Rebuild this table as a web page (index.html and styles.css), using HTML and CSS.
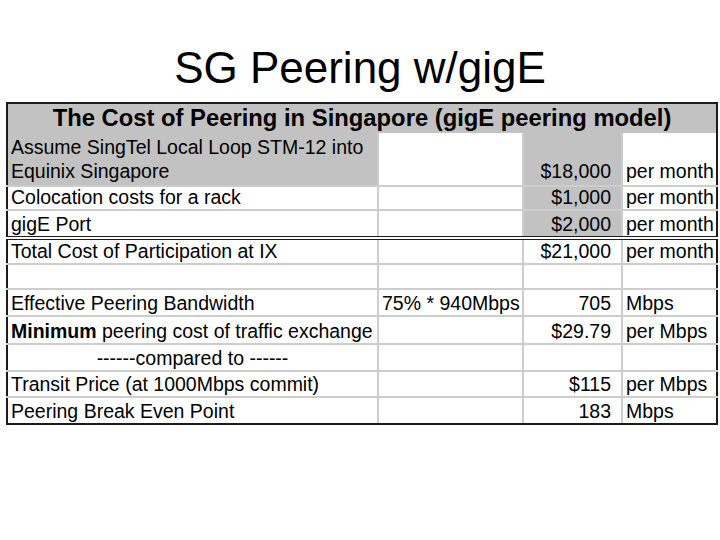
FILE: index.html
```html
<!DOCTYPE html>
<html>
<head>
<meta charset="utf-8">
<title>SG Peering w/gigE</title>
<link rel="stylesheet" href="styles.css">
</head>
<body>
<h1 class="title">SG Peering w/gigE</h1>
<table class="cost">
  <colgroup>
    <col class="c1"><col class="c2"><col class="c3"><col class="c4">
  </colgroup>
  <tr class="r-head">
    <th colspan="4">The Cost of Peering in Singapore (gigE peering model)</th>
  </tr>
  <tr class="r-assume">
    <td class="shade">Assume SingTel Local Loop STM-12 into<br>Equinix Singapore</td>
    <td></td>
    <td class="shade num">$18,000</td>
    <td>per month</td>
  </tr>
  <tr class="r-coloc">
    <td>Colocation costs for a rack</td>
    <td></td>
    <td class="shade num">$1,000</td>
    <td>per month</td>
  </tr>
  <tr class="r-port">
    <td>gigE Port</td>
    <td></td>
    <td class="shade num">$2,000</td>
    <td>per month</td>
  </tr>
  <tr class="r-total">
    <td>Total Cost of Participation at IX</td>
    <td></td>
    <td class="num">$21,000</td>
    <td>per month</td>
  </tr>
  <tr class="r-empty">
    <td></td><td></td><td></td><td></td>
  </tr>
  <tr class="r-eff">
    <td>Effective Peering Bandwidth</td>
    <td>75% * 940Mbps</td>
    <td class="num">705</td>
    <td>Mbps</td>
  </tr>
  <tr class="r-min">
    <td><b>Minimum</b> peering cost of traffic exchange</td>
    <td></td>
    <td class="num">$29.79</td>
    <td>per Mbps</td>
  </tr>
  <tr class="r-cmp">
    <td class="center">------compared to ------</td>
    <td></td><td></td><td></td>
  </tr>
  <tr class="r-transit">
    <td>Transit Price (at 1000Mbps commit)</td>
    <td></td>
    <td class="num">$115</td>
    <td>per Mbps</td>
  </tr>
  <tr class="r-break">
    <td>Peering Break Even Point</td>
    <td></td>
    <td class="num">183</td>
    <td>Mbps</td>
  </tr>
</table>
</body>
</html>
```
FILE: styles.css
```css
html, body {
  margin: 0;
  padding: 0;
  background: #ffffff;
}

body {
  font-family: "Liberation Sans", Arial, sans-serif;
  color: #000000;
}

.title {
  margin: 43px 0 0;
  height: 59px;
  font-size: 44px;
  font-weight: normal;
  line-height: 50px;
  text-align: center;
}

.cost {
  margin-left: 6px;
  border-collapse: collapse;
  table-layout: fixed;
  width: 712px;
  border: 2px solid #1c1c1c;
  font-size: 19.5px;
}

.c1 { width: 371px; }
.c2 { width: 145px; }
.c3 { width: 99px; }
.c4 { width: 95px; }

.cost th {
  background: #c2c2c2;
  font-size: 23.8px;
  font-weight: bold;
  text-align: center;
  vertical-align: bottom;
  line-height: 24px;
  height: 26px;
  padding: 0 0 3px;
  border: 0;
}

.cost td {
  border: 2px solid #cdcdcd;
  padding: 0 3px 2px;
  vertical-align: bottom;
  line-height: 20px;
  white-space: nowrap;
  overflow: hidden;
}

.cost td:first-child { border-left-color: #1c1c1c; }
.cost td:last-child { border-right-color: #1c1c1c; }

.cost .r-assume td { border-top: 0; line-height: 24px; }

.cost .shade { background: #c2c2c2; }
.cost .num { text-align: right; padding-right: 10px; }
.cost .center { text-align: center; }

.r-assume td { height: 50px; }
.r-coloc td { height: 19px; }
.r-port td { height: 23px; border-bottom: 4px double #1c1c1c; }
.r-total td { height: 21px; }
.r-empty td { height: 21px; }
.r-eff td { height: 23px; }
.r-min td { height: 24px; }
.r-cmp td { height: 23px; }
.r-transit td { height: 22px; }
.r-break td { height: 23px; border-bottom-color: #1c1c1c; }
```
